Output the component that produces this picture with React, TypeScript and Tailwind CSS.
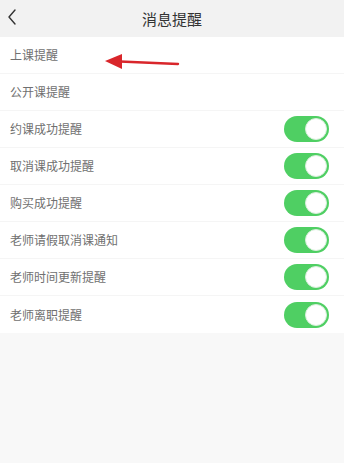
import React, { useState } from 'react';

const rows = [
  { label: '上课提醒', toggle: false },
  { label: '公开课提醒', toggle: false },
  { label: '约课成功提醒', toggle: true },
  { label: '取消课成功提醒', toggle: true },
  { label: '购买成功提醒', toggle: true },
  { label: '老师请假取消课通知', toggle: true },
  { label: '老师时间更新提醒', toggle: true },
  { label: '老师离职提醒', toggle: true },
];

const Toggle = ({ isOn, onToggle }: { isOn: boolean; onToggle: () => void }) => (
  <button
    onClick={onToggle}
    className={`w-[45px] h-[26px] rounded-full p-[2px] flex items-center shrink-0 ${isOn ? 'bg-[#4fcf63]' : 'bg-[#e5e5e5]'}`}
  >
    <div
      className={`w-[22px] h-[22px] bg-white rounded-full border border-[#d8eedb] ${isOn ? 'ml-auto' : ''}`}
    />
  </button>
);

export default function App() {
  const [toggles, setToggles] = useState(rows.map((r) => r.toggle));

  return (
    <div className="w-[344px] h-[463px] bg-[#f8f8f8] flex flex-col font-['Noto_Sans_CJK_SC',sans-serif]">
      {/* Header */}
      <div className="h-[37px] bg-[#f2f2f2] relative flex items-center justify-center shrink-0">
        <svg className="absolute left-[6px] top-[8px]" width="12" height="18" viewBox="0 0 12 18">
          <path d="M9 2 L3 9 L9 16" fill="none" stroke="#333" strokeWidth="1.4" strokeLinecap="round" strokeLinejoin="round" />
        </svg>
        <span className="text-[15px] text-[#333] leading-none">消息提醒</span>
      </div>

      {/* List */}
      <div className="bg-white relative">
        {rows.map((row, i) => (
          <div
            key={row.label}
            className={`h-[37px] flex items-center justify-between pl-[10px] pr-[15px] ${i < rows.length - 1 ? 'border-b border-[#f5f5f5]' : ''}`}
          >
            <span className="text-[12px] text-[#707070] leading-none">{row.label}</span>
            {row.toggle && (
              <Toggle
                isOn={toggles[i]}
                onToggle={() => setToggles((prev) => prev.map((v, j) => (j === i ? !v : v)))}
              />
            )}
          </div>
        ))}

        {/* Red annotation arrow */}
        <svg className="absolute left-[100px] top-[17px]" width="85" height="24" viewBox="0 0 85 24">
          <line x1="20" y1="7.5" x2="78" y2="10" stroke="#d9262b" strokeWidth="2.4" strokeLinecap="round" />
          <polygon points="5,7 22,0 22,15" fill="#d9262b" />
        </svg>
      </div>
    </div>
  );
}
